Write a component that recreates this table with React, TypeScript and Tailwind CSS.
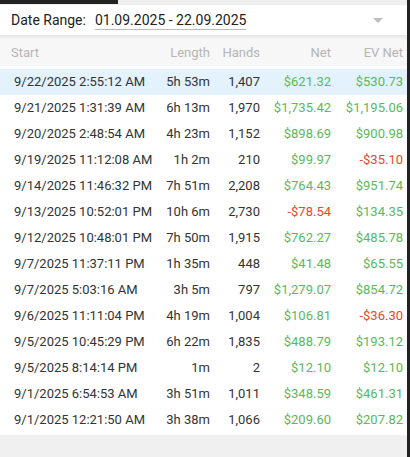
type Session = {
  start: string;
  length: string;
  hands: string;
  net: string;
  ev: string;
};

const SESSIONS: Session[] = [
  { start: "9/22/2025 2:55:12 AM", length: "5h 53m", hands: "1,407", net: "$621.32", ev: "$530.73" },
  { start: "9/21/2025 1:31:39 AM", length: "6h 13m", hands: "1,970", net: "$1,735.42", ev: "$1,195.06" },
  { start: "9/20/2025 2:48:54 AM", length: "4h 23m", hands: "1,152", net: "$898.69", ev: "$900.98" },
  { start: "9/19/2025 11:12:08 AM", length: "1h 2m", hands: "210", net: "$99.97", ev: "-$35.10" },
  { start: "9/14/2025 11:46:32 PM", length: "7h 51m", hands: "2,208", net: "$764.43", ev: "$951.74" },
  { start: "9/13/2025 10:52:01 PM", length: "10h 6m", hands: "2,730", net: "-$78.54", ev: "$134.35" },
  { start: "9/12/2025 10:48:01 PM", length: "7h 50m", hands: "1,915", net: "$762.27", ev: "$485.78" },
  { start: "9/7/2025 11:37:11 PM", length: "1h 35m", hands: "448", net: "$41.48", ev: "$65.55" },
  { start: "9/7/2025 5:03:16 AM", length: "3h 5m", hands: "797", net: "$1,279.07", ev: "$854.72" },
  { start: "9/6/2025 11:11:04 PM", length: "4h 19m", hands: "1,004", net: "$106.81", ev: "-$36.30" },
  { start: "9/5/2025 10:45:29 PM", length: "6h 22m", hands: "1,835", net: "$488.79", ev: "$193.12" },
  { start: "9/5/2025 8:14:14 PM", length: "1m", hands: "2", net: "$12.10", ev: "$12.10" },
  { start: "9/1/2025 6:54:53 AM", length: "3h 51m", hands: "1,011", net: "$348.59", ev: "$461.31" },
  { start: "9/1/2025 12:21:50 AM", length: "3h 38m", hands: "1,066", net: "$209.60", ev: "$207.82" },
];

// red for losses, green otherwise
const money = (v: string) => (v.startsWith("-") ? "text-[#e5492a]" : "text-[#5cb85c]");

const COLS = "grid grid-cols-[152px_58px_50px_71px_72px]";

export default function App() {
  return (
    <div className="flex h-[457px] w-[410px] bg-[#f0f0f0] font-['Roboto',sans-serif]">
      <div className="flex w-[407px] flex-col">
        <div className="h-[5px] bg-[#eeeeee]">
          <div className="h-[4px] w-[118px] bg-[#222222]" />
        </div>

        <div className="flex h-[30px] items-center bg-white pl-[11px] pr-[24px] text-[14px] text-[#222]">
          <span>Date Range:</span>
          <span className="ml-[9px] border-b border-[#bbb] leading-[18px]">01.09.2025 - 22.09.2025</span>
          <span className="ml-auto h-0 w-0 border-x-[5px] border-t-[5px] border-x-transparent border-t-[#bdbdbd]" />
        </div>

        <div className="h-[5px] bg-gradient-to-b from-[#e6e6e6] to-[#f7f7f7]" />

        <div className={`${COLS} h-[26px] items-center bg-[#f7f7f7] text-[13px] text-[#b5b5b5]`}>
          <span className="pl-[11px]">Start</span>
          <span className="text-right">Length</span>
          <span className="text-right">Hands</span>
          <span className="text-right">Net</span>
          <span className="text-right">EV Net</span>
        </div>

        <div className="bg-white pt-[3px] pb-[2px]">
          {SESSIONS.map((s, i) => (
            <div
              key={s.start}
              className={`${COLS} h-[26px] items-center text-[13px] text-[#333] ${i === 0 ? "bg-[#e3f2fd]" : ""}`}
            >
              <span className="whitespace-nowrap pl-[14px]">{s.start}</span>
              <span className="text-right">{s.length}</span>
              <span className="text-right">{s.hands}</span>
              <span className={`text-right ${money(s.net)}`}>{s.net}</span>
              <span className={`text-right ${money(s.ev)}`}>{s.ev}</span>
            </div>
          ))}
        </div>
      </div>
      <div className="w-[3px] bg-[#222222]" />
    </div>
  );
}
